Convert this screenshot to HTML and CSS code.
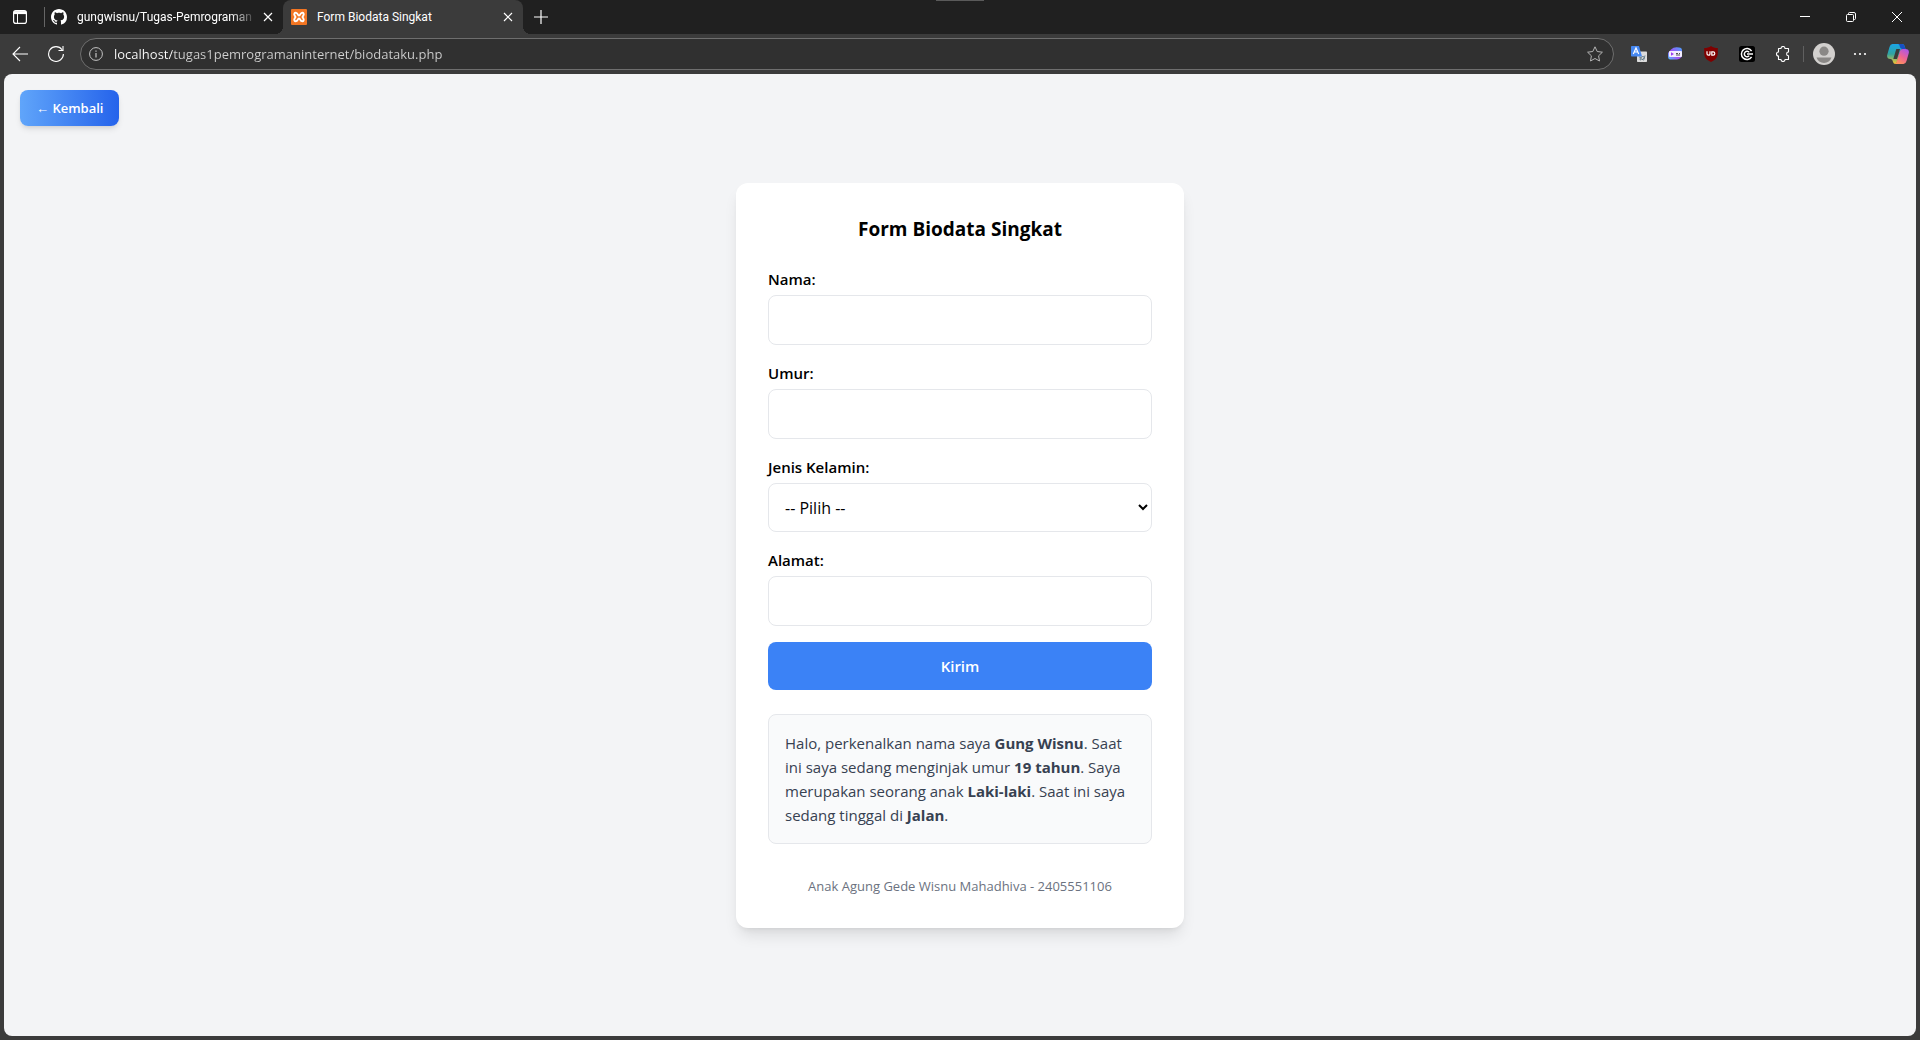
FILE: index.html
```html
<!DOCTYPE html>
<html lang="id">
<head>
<meta charset="utf-8">
<meta name="viewport" content="width=device-width, initial-scale=1">
<title>Form Biodata Singkat</title>
<link rel="stylesheet" href="styles.css">
</head>
<body>
<div class="browser">
  <header class="tabstrip">
    <span class="drag-handle"></span>
    <button class="icon-btn tab-actions" aria-label="Menu tab">
      <svg width="14" height="14" viewBox="0 0 14 14" fill="none" stroke="#fff"><rect x=".6" y=".6" width="12.8" height="12.8" rx="2.2" stroke-width="1.2"/><path d="M1 2.6h12" stroke-width="3"/><path d="M4.5 4v9" stroke-width="1"/></svg>
    </button>
    <div class="tab">
      <svg class="favicon" width="16" height="16" viewBox="0 0 16 16" fill="#fff"><path d="M8 0C3.58 0 0 3.58 0 8c0 3.54 2.29 6.53 5.47 7.59.4.07.55-.17.55-.38 0-.19-.01-.82-.01-1.49-2.01.37-2.53-.49-2.69-.94-.09-.23-.48-.94-.82-1.13-.28-.15-.68-.52-.01-.53.63-.01 1.08.58 1.23.82.72 1.21 1.87.87 2.33.66.07-.52.28-.87.51-1.07-1.78-.2-3.64-.89-3.64-3.95 0-.87.31-1.59.82-2.15-.08-.2-.36-1.02.08-2.12 0 0 .67-.21 2.2.82.64-.18 1.32-.27 2-.27s1.36.09 2 .27c1.53-1.04 2.2-.82 2.2-.82.44 1.1.16 1.92.08 2.12.51.56.82 1.27.82 2.15 0 3.07-1.87 3.75-3.65 3.95.29.25.54.73.54 1.48 0 1.07-.01 1.93-.01 2.2 0 .21.15.46.55.38A8.01 8.01 0 0 0 16 8c0-4.42-3.58-8-8-8Z"/></svg>
      <span class="tab-title faded">gungwisnu/Tugas-Pemrograman-</span>
      <button class="icon-btn close" aria-label="Tutup tab"><svg width="10" height="10" viewBox="0 0 10 10" stroke="#fff" stroke-width="1.2"><path d="M1 1l8 8M9 1l-8 8"/></svg></button>
    </div>
    <div class="tab active">
      <svg class="favicon" width="16" height="16" viewBox="0 0 16 16"><rect width="16" height="16" rx="1" fill="#f37623"/><path d="M5.200 3.800C3.500 3.300 2.800 5 3.600 6.400L4.500 8l-.9 1.600c-.8 1.400-.1 3.100 1.600 2.600C7 11.700 6.600 9.500 8 9.500s1 2.200 2.800 2.700c1.700.5 2.400-1.200 1.600-2.600L11.500 8l.9-1.600c.8-1.400.1-3.100-1.600-2.600C9 4.300 9.400 6.500 8 6.500S7 4.300 5.200 3.800Z" fill="none" stroke="#fff" stroke-width="1.900" stroke-linejoin="round"/></svg>
      <span class="tab-title">Form Biodata Singkat</span>
      <button class="icon-btn close" aria-label="Tutup tab"><svg width="10" height="10" viewBox="0 0 10 10" stroke="#fff" stroke-width="1.2"><path d="M1 1l8 8M9 1l-8 8"/></svg></button>
    </div>
    <button class="icon-btn new-tab" aria-label="Tab baru"><svg width="14" height="14" viewBox="0 0 14 14" stroke="#fff" stroke-width="1.2"><path d="M7 0v14M0 7h14"/></svg></button>
    <div class="window-controls">
      <button class="icon-btn" aria-label="Minimalkan"><svg width="10" height="10" viewBox="0 0 10 10" stroke="#fff"><path d="M0 4.500h10"/></svg></button>
      <button class="icon-btn" aria-label="Pulihkan"><svg width="10" height="10" viewBox="0 0 10 10" fill="none" stroke="#fff"><rect x=".5" y="2.500" width="7" height="7" rx="1"/><path d="M2.500 2.500V1.500a1 1 0 0 1 1-1h4.500a1.500 1.500 0 0 1 1.500 1.500v4.500a1 1 0 0 1-1 1h-1"/></svg></button>
      <button class="icon-btn" aria-label="Tutup"><svg width="10" height="10" viewBox="0 0 10 10" stroke="#fff"><path d="M0 0l10 10M10 0L0 10"/></svg></button>
    </div>
  </header>

  <nav class="toolbar">
    <button class="icon-btn nav-btn" aria-label="Kembali ke halaman sebelumnya"><svg width="16" height="16" viewBox="0 0 16 16" fill="none" stroke="#fff" stroke-width="1.100"><path d="M16 8H1M8 1L1 8l7 7"/></svg></button>
    <button class="icon-btn nav-btn" aria-label="Muat ulang"><svg width="16" height="16" viewBox="0 0 16 16" fill="none" stroke="#fff" stroke-width="1.100"><path d="M15.400 8A7.400 7.400 0 1 1 14 3.700M15 0v4.500h-4.500"/></svg></button>
    <div class="address">
      <svg width="14" height="14" viewBox="0 0 14 14" fill="none" stroke="#c4c4c4"><circle cx="7" cy="7" r="6.400"/><path d="M7 6v4.500M7 3.500v1.300" stroke-width="1.200"/></svg>
      <input class="url" type="text" aria-label="Alamat situs" value="localhost/tugas1pemrogramaninternet/biodataku.php">
      <button class="icon-btn" aria-label="Favorit"><svg width="16" height="16" viewBox="0 0 16 16" fill="none" stroke="#b4b4b4" stroke-linejoin="round"><path d="M8 .8l2.200 4.700 5.200.700-3.800 3.600.9 5.200L8 12.500 3.500 15l.9-5.200L.6 6.200l5.200-.7z"/></svg></button>
    </div>
    <div class="extensions">
      <button class="icon-btn" aria-label="Google Terjemahan"><svg width="16" height="16" viewBox="0 0 16 16"><rect x="6" y="5.500" width="10" height="10.500" rx=".7" fill="#dcdcdc"/><path d="M0 .7Q0 0 .7 0H8l3 10.500H.7Q0 10.500 0 9.800Z" fill="#4688f1"/><path d="M2.300 8L5 2l2.700 6M3.300 6h3.400" stroke="#fff" stroke-width="1.200" fill="none"/><path d="M8 11.500c2-2 3 3 1.500 2.500s1-4 3-3.500.5 4-.5 3.500M14 9.500c-.5 2-1.500 3-3 4.500" stroke="#607988" fill="none"/></svg></button>
      <button class="icon-btn" aria-label="Ekstensi rekaman"><svg width="16" height="16" viewBox="0 0 16 16"><defs><linearGradient id="rec" x1="0" y1="1" x2="1" y2="0"><stop offset="0" stop-color="#4fc3ff"/><stop offset=".45" stop-color="#a44df5"/><stop offset="1" stop-color="#46a8ff"/></linearGradient></defs><path d="M4 3.500Q7 .5 12 1.500q3 0 3 3v5q-.5 3-5 4H4Q1 14 1 10V7Z" fill="url(#rec)"/><rect x="2" y="5" width="13" height="6" rx="1" fill="#f3edff"/><path d="M4 6.300v3.400l3-1.700z" fill="#9c3cf0"/><path d="M9 7.500h2M12 7.500h1M9 9h4" stroke="#555" stroke-width="1.200"/></svg></button>
      <button class="icon-btn" aria-label="uBlock"><svg width="16" height="16" viewBox="0 0 16 16"><path d="M8 0c2 1.500 4 2 6.800 2v5c0 5-3 7.300-6.800 9-3.800-1.700-6.800-4-6.800-9V2C4 2 6 1.500 8 0Z" fill="#800000"/><path d="M4 5.300v2.500q0 1.400 1.400 1.400h.4q1.200 0 1.200-1.400V5.300M8.800 5.900h1.400a1.600 1.600 0 0 1 0 3.200H8.800z" stroke="#fff" stroke-width="1.200" fill="none"/></svg></button>
      <button class="icon-btn" aria-label="Ekstensi C"><svg width="16" height="16" viewBox="0 0 16 16"><rect width="16" height="16" rx="2.500" fill="#000"/><path d="M12.600 5.100A5.500 5.500 0 1 0 12.600 10.900M10.200 6.400a2.700 2.700 0 1 0 0 3.200M8 8h6" stroke="#fff" stroke-width="1.500" fill="none"/></svg></button>
      <button class="icon-btn" aria-label="Ekstensi"><svg width="16" height="16" viewBox="0 0 16 16" fill="none" stroke="#fff" stroke-width="1.100" stroke-linejoin="round"><path d="M3.500 2.500H6a2 2 0 0 1 4 0h3.500V6a1.900 1.900 0 0 0 0 3.800v3.700H10a2 2 0 0 1-4 0H3.500V10a1.900 1.900 0 0 1 0-4Z"/></svg></button>
    </div>
    <span class="separator"></span>
    <button class="icon-btn avatar" aria-label="Profil"><svg width="22" height="22" viewBox="0 0 22 22"><circle cx="11" cy="11" r="11" fill="#d2d0ce"/><circle cx="11" cy="8.200" r="4.600" fill="#8a8886"/><path d="M3.500 14.500h15A8.400 8.400 0 0 1 11 20a8.400 8.400 0 0 1-7.500-5.500Z" fill="#8a8886"/></svg></button>
    <button class="icon-btn more" aria-label="Lainnya"><svg width="14" height="4" viewBox="0 0 14 4" fill="#fff"><circle cx="2" cy="2" r="1.100"/><circle cx="7" cy="2" r="1.100"/><circle cx="12" cy="2" r="1.100"/></svg></button>
    <button class="icon-btn copilot" aria-label="Copilot"><svg width="22" height="20" viewBox="0 0 22 20"><defs><linearGradient id="cpa" x1="0" y1="0" x2="0" y2="1"><stop offset="0" stop-color="#1aa5e8"/><stop offset=".5" stop-color="#31a4a0"/><stop offset="1" stop-color="#f7c92c"/></linearGradient><linearGradient id="cpb" x1=".8" y1="0" x2=".2" y2="1"><stop offset="0" stop-color="#ad56e8"/><stop offset=".5" stop-color="#ee6491"/><stop offset="1" stop-color="#ff9a55"/></linearGradient></defs><path d="M5.500 0H15q2 0 2.600 2l.9 3H16q-2 0-2.600 2l-3 9.500Q10 18 8.500 20q-2 0-2.500-2l-.5-1.500q-.5-1.500-2-1.500Q-.5 15 .2 11L2.500 3Q3.300 0 5.500 0Z" fill="url(#cpa)"/><path d="M11 0h4q2 0 2.600 2l.9 3h-3.600L13 3.500Q12.500 0 11 0Z" fill="#174fc4"/><path d="M16.500 20H7q2 0 2.700-2.300l3.200-10.400Q13.600 5 15.800 5h2.700Q22.500 5 21.800 9l-2.300 8Q18.700 20 16.500 20Z" fill="url(#cpb)"/><path d="M9.300 5h3.700l-3 10H6.300Z" fill="#3b3b3b"/></svg></button>
  </nav>

  <div class="page">
    <a class="back" href="#">← Kembali</a>
    <main class="card">
      <h1 class="title">Form Biodata Singkat</h1>
      <form class="form">
        <div class="field">
          <label for="nama">Nama:</label>
          <input class="control" id="nama" name="nama" type="text">
        </div>
        <div class="field">
          <label for="umur">Umur:</label>
          <input class="control" id="umur" name="umur" type="text">
        </div>
        <div class="field">
          <label for="jk">Jenis Kelamin:</label>
          <select class="control select" id="jk" name="jk">
            <option>-- Pilih --</option>
            <option>Laki-laki</option>
            <option>Perempuan</option>
          </select>
        </div>
        <div class="field">
          <label for="alamat">Alamat:</label>
          <input class="control" id="alamat" name="alamat" type="text">
        </div>
        <button class="submit" type="submit">Kirim</button>
      </form>
      <p class="result">Halo, perkenalkan nama saya <strong>Gung Wisnu</strong>. Saat ini saya sedang menginjak umur <strong>19 tahun</strong>. Saya merupakan seorang anak <strong>Laki-laki</strong>. Saat ini saya sedang tinggal di <strong>Jalan</strong>.</p>
      <footer class="credit">Anak Agung Gede Wisnu Mahadhiva - 2405551106</footer>
    </main>
  </div>
</div>
</body>
</html>
```

FILE: styles.css
```css
* {
  box-sizing: border-box;
}

body {
  margin: 0;
  font-family: "Open Sans", "Noto Sans", sans-serif;
  font-size: 15px;
  line-height: 24px;
  color: #000;
}

button,
input,
select {
  font: inherit;
}

svg {
  display: block;
  flex: none;
}

.browser {
  min-height: 100vh;
  display: flex;
  flex-direction: column;
  background: #3b3b3b;
}

/* Tab strip */
.tabstrip {
  position: relative;
  display: flex;
  align-items: stretch;
  height: 34px;
  background: #202020;
  color: #fff;
}

.drag-handle {
  position: absolute;
  top: 0;
  left: 50%;
  width: 48px;
  height: 1px;
  margin-left: -24px;
  background: #5a5a5a;
}

.icon-btn {
  display: flex;
  align-items: center;
  justify-content: center;
  padding: 0;
  border: 0;
  background: none;
}

.tab-actions {
  width: 40px;
  margin-right: 3px;
}

.tab {
  position: relative;
  display: flex;
  align-items: center;
  width: 240px;
  padding: 0 9px 0 8px;
  gap: 10px;
  font-family: Roboto, "Open Sans", sans-serif;
  font-size: 12px;
  line-height: 16px;
}

.tab:not(.active)::before {
  content: "";
  width: 1px;
  height: 20px;
  margin-right: -4px;
  margin-left: -7px;
  background: #666;
}

.tab-title {
  flex: 1;
  overflow: hidden;
  white-space: nowrap;
}

.faded {
  mask-image: linear-gradient(90deg, #000 88%, rgb(0 0 0 / 20%));
}

.tab .close {
  width: 12px;
}

.tab.active {
  border-radius: 8px 8px 0 0;
  background: #3b3b3b;
}

.tab.active::before,
.tab.active::after {
  content: "";
  position: absolute;
  bottom: 0;
  width: 8px;
  height: 8px;
}

.tab.active::before {
  right: 100%;
  background: radial-gradient(circle at 0 0, #202020 8px, #3b3b3b 8px);
}

.tab.active::after {
  left: 100%;
  background: radial-gradient(circle at 100% 0, #202020 8px, #3b3b3b 8px);
}

.new-tab {
  width: 36px;
}

.window-controls {
  display: flex;
  margin-left: auto;
}

.window-controls .icon-btn {
  width: 46px;
}

/* Toolbar */
.toolbar {
  display: flex;
  align-items: center;
  height: 40px;
  padding: 0 9px 0 2px;
}

.nav-btn {
  width: 36px;
  height: 32px;
}

.address {
  flex: 1;
  display: flex;
  align-items: center;
  height: 32px;
  margin-left: 6px;
  padding: 0 10px 0 8px;
  gap: 11px;
  border: 1px solid #6e6e6e;
  border-radius: 16px;
  background: #303030;
}

.url {
  flex: 1;
  padding: 0;
  border: 0;
  outline: 0;
  font-size: 13px;
  line-height: 20px;
  color: transparent;
  background: linear-gradient(90deg, #fff 58px, #d0d0d0 58px);
  background-clip: text;
  -webkit-background-clip: text;
}

.extensions {
  display: flex;
  margin-left: 7px;
}

.extensions .icon-btn {
  width: 36px;
}

.separator {
  width: 1px;
  height: 16px;
  margin: 0 9px 0 2px;
  background: #606060;
}

.more {
  width: 50px;
}

.copilot {
  width: 26px;
}

/* Page */
.page {
  flex: 1;
  display: grid;
  margin: 0 4px 4px;
  padding: 16px;
  border-radius: 8px;
  background: #f3f4f6;
}

.back,
.card {
  grid-area: 1 / 1;
}

.back {
  place-self: start;
  padding: 8px 16px;
  border-radius: 8px;
  background: linear-gradient(90deg, #60a5fa, #2563eb);
  box-shadow: 0 4px 6px -1px rgb(0 0 0 / 10%), 0 2px 4px -2px rgb(0 0 0 / 10%);
  font-size: 13px;
  font-weight: 600;
  line-height: 20px;
  color: #fff;
  text-decoration: none;
}

.card {
  place-self: center;
  width: 100%;
  max-width: 448px;
  padding: 32px;
  border-radius: 12px;
  background: #fff;
  box-shadow: 0 10px 15px -3px rgb(0 0 0 / 10%), 0 4px 6px -4px rgb(0 0 0 / 10%);
}

.title {
  margin: 0 0 24px;
  font-size: 19px;
  font-weight: 700;
  line-height: 28px;
  text-align: center;
}

.form {
  display: flex;
  flex-direction: column;
  gap: 16px;
}

.field {
  display: flex;
  flex-direction: column;
  gap: 4px;
  font-weight: 600;
}

.control {
  width: 100%;
  height: 50px;
  padding: 12px 16px;
  border: 1px solid #e5e7eb;
  border-radius: 8px;
  background: #fff;
  font-weight: 400;
  color: #000;
}

.select {
  height: 49px;
  padding: 12px;
  font-size: 16px;
}

.submit {
  height: 48px;
  border: 0;
  border-radius: 8px;
  background: #3b82f6;
  font-weight: 600;
  color: #fff;
}

.result {
  margin: 24px 0 0;
  padding: 16px;
  border: 1px solid #e5e7eb;
  border-radius: 8px;
  background: #f9fafb;
  color: #374151;
}

.credit {
  margin-top: 32px;
  font-size: 13px;
  line-height: 20px;
  text-align: center;
  color: #6b7280;
}
```
